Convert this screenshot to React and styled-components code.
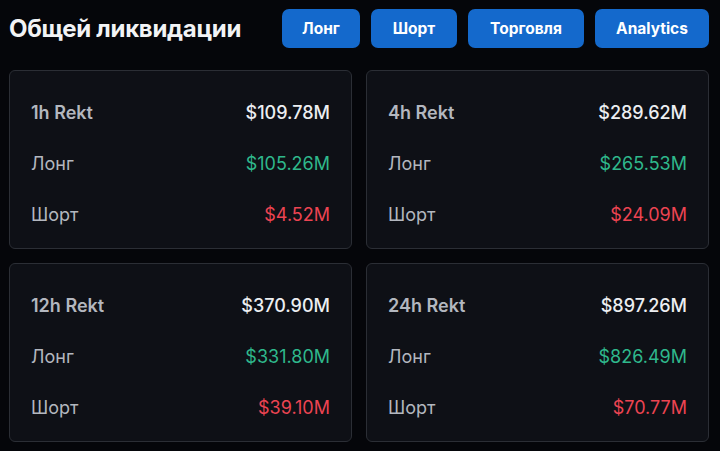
import React from 'react';
import styled, { createGlobalStyle } from 'styled-components';

const GlobalStyle = createGlobalStyle`
  html, body {
    margin: 0;
    padding: 0;
    background: #05060a;
  }
  body {
    font-family: Inter, "Noto Sans", "Liberation Sans", sans-serif;
    color: #eaecef;
  }
`;

const Page = styled.div`
  width: 720px;
  height: 451px;
  box-sizing: border-box;
  padding: 9px 11px 9px 9px;
  background: #05060a;
`;

const Header = styled.div`
  display: flex;
  align-items: center;
  justify-content: space-between;
  height: 39px;
  margin-bottom: 22px;
`;

const Title = styled.h1`
  margin: 0;
  font-size: 24px;
  font-weight: 700;
  color: #f2f3f5;
  letter-spacing: -0.3px;
`;

const Buttons = styled.div`
  display: flex;
  gap: 11px;
`;

const Button = styled.button`
  height: 39px;
  width: ${p => p.w}px;
  border: none;
  border-radius: 7px;
  background: #1469cc;
  color: #fff;
  font-family: Inter, "Noto Sans", sans-serif;
  font-size: 15.5px;
  font-weight: 700;
  cursor: pointer;
  padding: 0;
`;

const Grid = styled.div`
  display: grid;
  grid-template-columns: 1fr 1fr;
  gap: 14px;
`;

const Card = styled.div`
  height: 179px;
  box-sizing: border-box;
  border: 1px solid #2b2e35;
  border-radius: 6px;
  background: #0e1016;
  padding: 16px 21px 8px 21px;
  display: flex;
  flex-direction: column;
`;

const Row = styled.div`
  height: 51px;
  display: flex;
  align-items: center;
  justify-content: space-between;
  font-size: 18px;
`;

const Label = styled.span`
  color: #b3b7bf;
  font-weight: ${p => (p.head ? 600 : 400)};
`;

const Value = styled.span`
  font-weight: ${p => (p.head ? 500 : 400)};
  color: ${p => (p.tone === 'up' ? '#2fb88c' : p.tone === 'down' ? '#ec4452' : '#eceef1')};
`;

const data = [
  { period: '1h', total: '$109.78M', long: '$105.26M', short: '$4.52M' },
  { period: '4h', total: '$289.62M', long: '$265.53M', short: '$24.09M' },
  { period: '12h', total: '$370.90M', long: '$331.80M', short: '$39.10M' },
  { period: '24h', total: '$897.26M', long: '$826.49M', short: '$70.77M' },
];

export default function App() {
  return (
    <>
      <GlobalStyle />
      <Page>
        <Header>
          <Title>Общей ликвидации</Title>
          <Buttons>
            <Button w={78}>Лонг</Button>
            <Button w={86}>Шорт</Button>
            <Button w={116}>Торговля</Button>
            <Button w={114}>Analytics</Button>
          </Buttons>
        </Header>
        <Grid>
          {data.map(d => (
            <Card key={d.period}>
              <Row>
                <Label head>{d.period} Rekt</Label>
                <Value head>{d.total}</Value>
              </Row>
              <Row>
                <Label>Лонг</Label>
                <Value tone="up">{d.long}</Value>
              </Row>
              <Row>
                <Label>Шорт</Label>
                <Value tone="down">{d.short}</Value>
              </Row>
            </Card>
          ))}
        </Grid>
      </Page>
    </>
  );
}
